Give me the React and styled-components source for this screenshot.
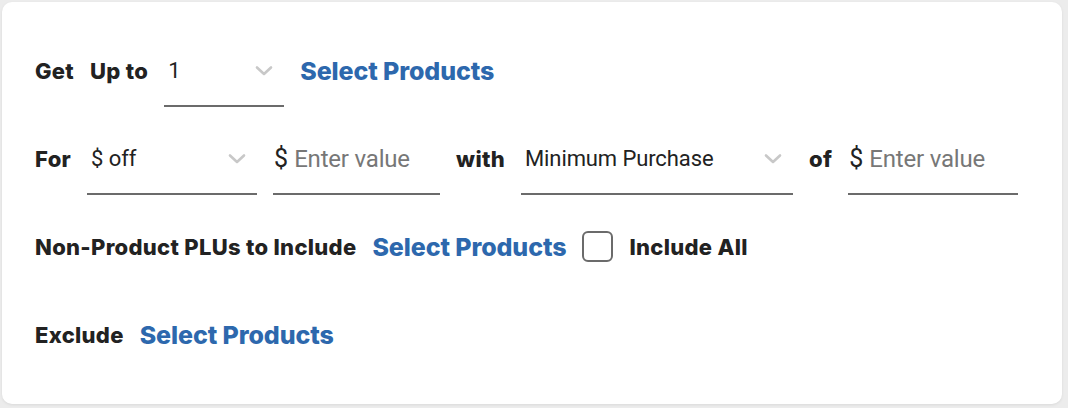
import React from 'react';
import styled, { createGlobalStyle } from 'styled-components';

const GlobalStyle = createGlobalStyle`
  body {
    margin: 0;
    background: #ececec;
    font-family: Roboto, "Noto Sans", sans-serif;
  }
`;

const Page = styled.div`
  padding: 2px 6px 6px 2px;
`;

const Card = styled.div`
  background: #fff;
  border-radius: 10px;
  box-shadow: 0 1px 3px rgba(0, 0, 0, 0.08);
  padding: 49px 0 1px 33px;
`;

const Row = styled.div`
  display: flex;
  align-items: flex-start;
  gap: 16px;
  height: 88px;
`;

const Label = styled.span`
  font-family: Inter, Roboto, sans-serif;
  font-weight: 800;
  font-size: 22px;
  line-height: 40px;
  color: #222;
  letter-spacing: 0.3px;
  white-space: nowrap;
`;

const LinkButton = styled.button`
  border: 0;
  background: none;
  padding: 0;
  font-family: Inter, Roboto, sans-serif;
  font-weight: 800;
  font-size: 25px;
  line-height: 40px;
  color: #2d68ad;
  letter-spacing: -0.1px;
  cursor: pointer;
  white-space: nowrap;
`;

const Field = styled.div`
  box-sizing: border-box;
  width: ${(p) => p.$width}px;
  height: 56px;
  display: flex;
  align-items: flex-start;
  border-bottom: 2px solid #6b6b6b;
  padding: 0 ${(p) => (p.$select ? 11 : 0)}px 0 ${(p) => (p.$select ? 4 : 1)}px;
  font-size: 22px;
  line-height: 40px;
  color: #222;
`;

const Value = styled.span`
  flex: 1;
  white-space: nowrap;
  letter-spacing: -0.1px;
`;

const Dollar = styled.span`
  font-size: 25px;
  color: #222;
  margin-right: 6px;
`;

const Placeholder = styled.span`
  font-size: 24px;
  color: #777;
  letter-spacing: -0.2px;
  white-space: nowrap;
`;

const Chevron = styled.svg`
  width: 18px;
  height: 40px;
  flex: none;
`;

const CheckBox = styled.span`
  box-sizing: border-box;
  width: 31px;
  height: 31px;
  margin-top: 4px;
  border: 2px solid #6b6b6b;
  border-radius: 6px;
  flex: none;
`;

const ChevronDown = () => (
  <Chevron viewBox="0 0 18 40">
    <path d="M2 16.5 L9 23 L16 16.5" fill="none" stroke="#c8c8c8" strokeWidth="2.6" strokeLinecap="round" strokeLinejoin="round" />
  </Chevron>
);

const Select = ({ width, value }) => (
  <Field $width={width} $select>
    <Value>{value}</Value>
    <ChevronDown />
  </Field>
);

const MoneyInput = ({ width }) => (
  <Field $width={width}>
    <Dollar>$</Dollar>
    <Placeholder>Enter value</Placeholder>
  </Field>
);

export default function App() {
  return (
    <>
      <GlobalStyle />
      <Page>
        <Card>
          <Row>
            <Label>Get</Label>
            <Label>Up to</Label>
            <Select width={120} value="1" />
            <LinkButton>Select Products</LinkButton>
          </Row>
          <Row>
            <Label>For</Label>
            <Select width={170} value="$ off" />
            <MoneyInput width={167} />
            <Label>with</Label>
            <Select width={272} value="Minimum Purchase" />
            <Label>of</Label>
            <MoneyInput width={170} />
          </Row>
          <Row>
            <Label>Non-Product PLUs to Include</Label>
            <LinkButton>Select Products</LinkButton>
            <CheckBox />
            <Label>Include All</Label>
          </Row>
          <Row>
            <Label>Exclude</Label>
            <LinkButton>Select Products</LinkButton>
          </Row>
        </Card>
      </Page>
    </>
  );
}
